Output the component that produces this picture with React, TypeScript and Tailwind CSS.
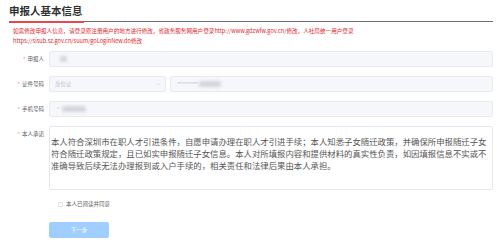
import React from 'react';
import { ChevronDown } from 'lucide-react';

const font = { fontFamily: '"Noto Sans CJK SC", "Noto Sans", sans-serif' };

function Label({ text }: { text: string }) {
  return (
    <div className="w-[40px] shrink-0 pr-[5px] flex items-center justify-end text-[5.5px] text-[#606266] leading-[16px]">
      <span className="text-[#f56c6c] mr-[2px]">*</span>
      {text}
    </div>
  );
}

function Blob({ w }: { w: string }) {
  return <div className={`${w} h-[6px] bg-[#d4d6db] rounded-[2px] blur-[1.5px]`}></div>;
}

export default function App() {
  const promise = [
    '本人符合深圳市在职人才引进条件，自愿申请办理在职人才引进手续；本人知悉子女随迁政策，并确保所申报随迁子女',
    '符合随迁政策规定，且已如实申报随迁子女信息。本人对所填报内容和提供材料的真实性负责，如因填报信息不实或不',
    '准确导致后续无法办理报到或入户手续的，相关责任和法律后果由本人承担。',
  ];

  return (
    <div className="w-[500px] h-[244px] bg-white pl-[9px] pr-[7px] pt-[4px] overflow-hidden" style={font}>
      <div className="flex border-b border-[#6b6b6b] h-[18px]">
        <h1 className="text-[10.5px] font-bold text-[#303133] leading-[14px] border-b-2 border-[#e5484d] -mb-[1.5px] pr-[1px]">
          申报人基本信息
        </h1>
      </div>

      <div className="mt-[4px] pl-[4px] text-[5.6px] leading-[10px] text-[#e0262d]">
        <p>如需修改申报人信息，请登录原注册用户的地方进行修改，省政务服务网用户登录http://www.gdzwfw.gov.cn/修改，人社局统一用户登录</p>
        <p>https://sisub.sz.gov.cn/suum/goLoginNew.do修改</p>
      </div>

      <div className="mt-[5px] flex flex-col gap-[9px]">
        <div className="flex">
          <Label text="申报人" />
          <div className="flex-1 h-[16px] bg-[#f5f7fa] border border-[#e8eaef] rounded-[2px] flex items-center pl-[10px]">
            <Blob w="w-[7px]" />
          </div>
        </div>

        <div className="flex">
          <Label text="证件号码" />
          <div className="w-[117px] h-[16px] bg-[#f5f7fa] border border-[#e8eaef] rounded-[2px] flex items-center justify-between pl-[5px] pr-[4px] text-[5.5px] text-[#c0c4cc]">
            <span>身份证</span>
            <ChevronDown className="w-[5px] h-[5px]" strokeWidth={2} />
          </div>
          <div className="flex-1 ml-[4px] h-[16px] bg-[#f5f7fa] border border-[#e8eaef] rounded-[2px] flex items-center pl-[6px] gap-[1px] text-[5.5px] text-[#b8bcc4]">
            <span className="tracking-[-0.5px]">**********</span>
            <Blob w="w-[22px]" />
          </div>
        </div>

        <div className="flex">
          <Label text="手机号码" />
          <div className="flex-1 h-[16px] bg-[#f5f7fa] border border-[#e8eaef] rounded-[2px] flex items-center pl-[7px] gap-[2px] text-[5.5px] text-[#b8bcc4]">
            <span>*</span>
            <Blob w="w-[24px]" />
          </div>
        </div>

        <div className="flex">
          <div className="w-[40px] shrink-0 pr-[5px] pt-[4px] flex justify-end text-[5.5px] text-[#606266] leading-[8px]">
            <span className="text-[#f56c6c] mr-[2px]">*</span>
            本人承诺
          </div>
          <div className="flex-1 h-[64px] bg-white border border-[#e4e7ed] rounded-[2px] pl-[1px] pt-[8px] text-[8.4px] leading-[12px] text-[#555]">
            {promise.map((line) => (
              <div key={line} className="whitespace-nowrap">{line}</div>
            ))}
          </div>
        </div>
      </div>

      <div className="mt-[9px] ml-[49px] flex items-center h-[10px] gap-[3px] text-[5.5px] text-[#606266]">
        <div className="w-[5px] h-[5px] border border-[#dcdfe6] rounded-[1px] bg-white"></div>
        <span>本人已阅读并同意</span>
      </div>

      <button className="mt-[13px] ml-[40px] w-[60px] h-[16px] bg-[#a0cfff] rounded-[2px] text-white text-[5.5px] flex items-center justify-center">
        下一步
      </button>
    </div>
  );
}
